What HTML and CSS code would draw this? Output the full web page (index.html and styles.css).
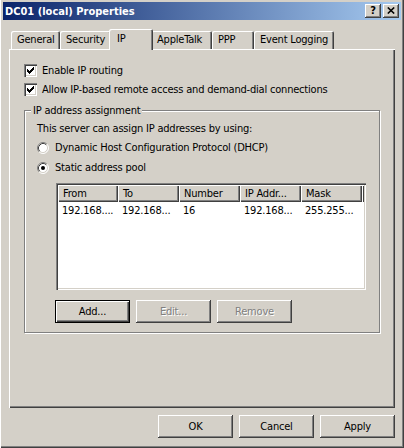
FILE: index.html
```html
<!DOCTYPE html>
<html>
<head>
<meta charset="utf-8">
<title>DC01 (local) Properties</title>
<link rel="stylesheet" href="styles.css">
</head>
<body>
<div class="window">
  <div class="titlebar">
    <span class="title">DC01 (local) Properties</span>
    <div class="tbtns">
      <div class="tbtn help">?</div>
      <div class="tbtn close">
        <svg width="8" height="7" viewBox="0 0 8 7"><path d="M0.8 0.5 L7.2 6.5 M7.2 0.5 L0.8 6.5" stroke="#000" stroke-width="1.6" fill="none"/></svg>
      </div>
    </div>
  </div>
  <div class="content">
    <div class="tabs">
      <div class="tab w-general">General</div>
      <div class="tab w-security">Security</div>
      <div class="tab selected w-ip">IP</div>
      <div class="tab w-apple">AppleTalk</div>
      <div class="tab w-ppp">PPP</div>
      <div class="tab w-event">Event Logging</div>
    </div>
    <div class="panel">
      <div class="check-row">
        <span class="checkbox"><svg width="13" height="13" viewBox="0 0 13 13" shape-rendering="crispEdges"><path fill="#000" d="M9 3h1v1H9zM8 4h2v1H8zM3 5h1v1H3zM7 5h3v1H7zM3 6h2v1H3zM6 6h3v1H6zM3 7h5v1H3zM4 8h3v1H4zM5 9h1v1H5z"/></svg></span>
        <span>Enable IP routing</span>
      </div>
      <div class="check-row second">
        <span class="checkbox"><svg width="13" height="13" viewBox="0 0 13 13" shape-rendering="crispEdges"><path fill="#000" d="M9 3h1v1H9zM8 4h2v1H8zM3 5h1v1H3zM7 5h3v1H7zM3 6h2v1H3zM6 6h3v1H6zM3 7h5v1H3zM4 8h3v1H4zM5 9h1v1H5z"/></svg></span>
        <span>Allow IP-based remote access and demand-dial connections</span>
      </div>
      <div class="group">
        <span class="group-label">IP address assignment</span>
        <div class="group-text">This server can assign IP addresses by using:</div>
        <div class="radio-row first">
          <span class="radio"><svg width="12" height="12" viewBox="0 0 12 12"><circle cx="6" cy="6" r="5" fill="#fff"/><path d="M2.11 9.89 A5.5 5.5 0 0 1 9.89 2.11" stroke="#808080" fill="none"/><path d="M9.89 2.11 A5.5 5.5 0 0 1 2.11 9.89" stroke="#fff" fill="none"/><path d="M2.82 9.18 A4.5 4.5 0 0 1 9.18 2.82" stroke="#404040" fill="none"/><path d="M9.18 2.82 A4.5 4.5 0 0 1 2.82 9.18" stroke="#D4D0C8" fill="none"/></svg></span>
          <span>Dynamic Host Configuration Protocol (DHCP)</span>
        </div>
        <div class="radio-row second">
          <span class="radio"><svg width="12" height="12" viewBox="0 0 12 12"><circle cx="6" cy="6" r="5" fill="#fff"/><path d="M2.11 9.89 A5.5 5.5 0 0 1 9.89 2.11" stroke="#808080" fill="none"/><path d="M9.89 2.11 A5.5 5.5 0 0 1 2.11 9.89" stroke="#fff" fill="none"/><path d="M2.82 9.18 A4.5 4.5 0 0 1 9.18 2.82" stroke="#404040" fill="none"/><path d="M9.18 2.82 A4.5 4.5 0 0 1 2.82 9.18" stroke="#D4D0C8" fill="none"/><circle cx="6" cy="6" r="2" fill="#000"/></svg></span>
          <span>Static address pool</span>
        </div>
        <div class="listview">
          <div class="lv-header">
            <div class="lv-col c1">From</div>
            <div class="lv-col c2">To</div>
            <div class="lv-col c3">Number</div>
            <div class="lv-col c4">IP Addr...</div>
            <div class="lv-col c5">Mask</div>
            <div class="lv-col fill"></div>
          </div>
          <div class="lv-row">
            <div class="lv-cell c1">192.168....</div>
            <div class="lv-cell c2">192.168...</div>
            <div class="lv-cell c3">16</div>
            <div class="lv-cell c4">192.168...</div>
            <div class="lv-cell c5">255.255...</div>
          </div>
        </div>
        <div class="btn-row">
          <div class="btn default">Add...</div>
          <div class="btn disabled">Edit...</div>
          <div class="btn disabled">Remove</div>
        </div>
      </div>
    </div>
    <div class="dialog-buttons">
      <div class="btn">OK</div>
      <div class="btn">Cancel</div>
      <div class="btn">Apply</div>
    </div>
  </div>
</div>
</body>
</html>
```
FILE: styles.css
```css
* { box-sizing: border-box; }
html, body { margin: 0; padding: 0; }
body {
  width: 404px;
  height: 448px;
  overflow: hidden;
  background: #D4D0C8;
  font-family: "DejaVu Sans Condensed", "DejaVu Sans", sans-serif;
  font-stretch: condensed;
  font-size: 11px;
  letter-spacing: -0.2px;
  color: #000;
}
.window {
  width: 404px;
  height: 448px;
  padding: 2px 3px 0 3px;
  background: #D4D0C8;
  box-shadow: inset 1px 0 #fff, inset -1px -1px #404040, inset -2px -2px #808080;
  display: flex;
  flex-direction: column;
}
.titlebar {
  height: 18px;
  display: flex;
  align-items: center;
  justify-content: space-between;
  background: linear-gradient(to right, #0A246A, #A6CAF0);
  padding: 0 2px;
}
.title {
  color: #fff;
  font-weight: bold;
  font-size: 11px;
  line-height: 13px;
  letter-spacing: 0;
}
.tbtns { display: flex; gap: 2px; }
.tbtn {
  width: 16px;
  height: 14px;
  background: #D4D0C8;
  box-shadow: inset -1px -1px #404040, inset 1px 1px #fff, inset -2px -2px #808080;
  display: flex;
  align-items: center;
  justify-content: center;
}
.tbtn.help {
  font-weight: bold;
  font-size: 11px;
  line-height: 12px;
  padding-bottom: 1px;
  letter-spacing: 0;
}
.tbtn svg { display: block; margin-bottom: 1px; }
.content { padding-left: 6px; }
.tabs {
  display: flex;
  align-items: flex-end;
  height: 20px;
  margin-top: 9px;
  padding-left: 2px;
  position: relative;
  z-index: 1;
}
.tab {
  height: 18px;
  line-height: 18px;
  padding-left: 6px;
  background: #D4D0C8;
  border-radius: 2px 2px 0 0;
  box-shadow: inset 1px 1px #fff, inset -1px 0 #404040, inset -2px 0 #808080;
  white-space: nowrap;
}
.tab.selected {
  height: 21px;
  line-height: 19px;
  padding-left: 8px;
  margin: 0 -2px -1px -2px;
  position: relative;
  z-index: 2;
}
.w-general { width: 49px; }
.w-security { width: 51px; }
.w-ip { width: 44px; }
.w-apple { width: 61px; }
.w-ppp { width: 42px; }
.w-event { width: 80px; }
.panel {
  width: 386px;
  height: 359px;
  background: #D4D0C8;
  box-shadow: inset 1px 1px #fff, inset -1px -1px #404040, inset -2px -2px #808080;
  padding: 15px 0 0 15px;
}
.check-row {
  display: flex;
  align-items: center;
  gap: 5px;
  height: 13px;
  line-height: 13px;
  white-space: nowrap;
}
.check-row.second { margin-top: 6px; }
.checkbox {
  width: 13px;
  height: 13px;
  background: #fff;
  box-shadow: inset 1px 1px #808080, inset 2px 2px #404040, inset -1px -1px #fff, inset -2px -2px #D4D0C8;
}
.checkbox svg, .radio svg { display: block; }
.group {
  width: 356px;
  height: 223px;
  margin-top: 14px;
  border: 1px solid #808080;
  box-shadow: 1px 1px 0 #fff, inset 1px 1px 0 #fff;
  padding-left: 12px;
  display: flex;
  flex-direction: column;
  align-items: flex-start;
}
.group-label {
  margin: -7px 0 0 -6px;
  padding: 0 2px;
  line-height: 13px;
  background: #D4D0C8;
}
.group-text {
  margin-top: 5px;
  line-height: 13px;
}
.radio-row {
  display: flex;
  align-items: center;
  gap: 6px;
  height: 13px;
  line-height: 13px;
}
.radio-row.first { margin-top: 6px; }
.radio-row.second { margin-top: 7px; }
.radio { width: 12px; height: 12px; }
.listview {
  width: 310px;
  height: 107px;
  margin: 9px 0 0 19px;
  background: #fff;
  padding: 2px;
  box-shadow: inset 1px 1px #808080, inset 2px 2px #404040, inset -1px -1px #fff, inset -2px -2px #D4D0C8;
}
.lv-header { display: flex; height: 17px; }
.lv-col {
  height: 17px;
  line-height: 17px;
  padding-left: 5px;
  background: #D4D0C8;
  box-shadow: inset 1px 1px #fff, inset -1px -1px #404040, inset -2px -2px #808080;
  white-space: nowrap;
}
.lv-col.fill { flex: 1; padding: 0; }
.c1 { width: 60px; }
.c2 { width: 61px; }
.c3 { width: 61px; }
.c4 { width: 61px; }
.c5 { width: 61px; }
.lv-row {
  display: flex;
  margin-top: 2px;
  height: 14px;
  line-height: 14px;
}
.lv-cell { padding-left: 4px; white-space: nowrap; overflow: hidden; }
.btn-row {
  display: flex;
  gap: 6px;
  margin: 10px 0 0 18px;
}
.btn {
  width: 75px;
  height: 23px;
  line-height: 23px;
  text-align: center;
  background: #D4D0C8;
  box-shadow: inset -1px -1px #404040, inset 1px 1px #fff, inset -2px -2px #808080;
}
.btn.default {
  box-shadow: inset 0 0 0 1px #000, inset 2px 2px #fff, inset -2px -2px #404040, inset -3px -3px #808080;
}
.btn.disabled {
  color: #808080;
  text-shadow: 1px 1px 0 #fff;
}
.dialog-buttons {
  display: flex;
  justify-content: flex-end;
  gap: 6px;
  width: 386px;
  margin-top: 7px;
}
```
